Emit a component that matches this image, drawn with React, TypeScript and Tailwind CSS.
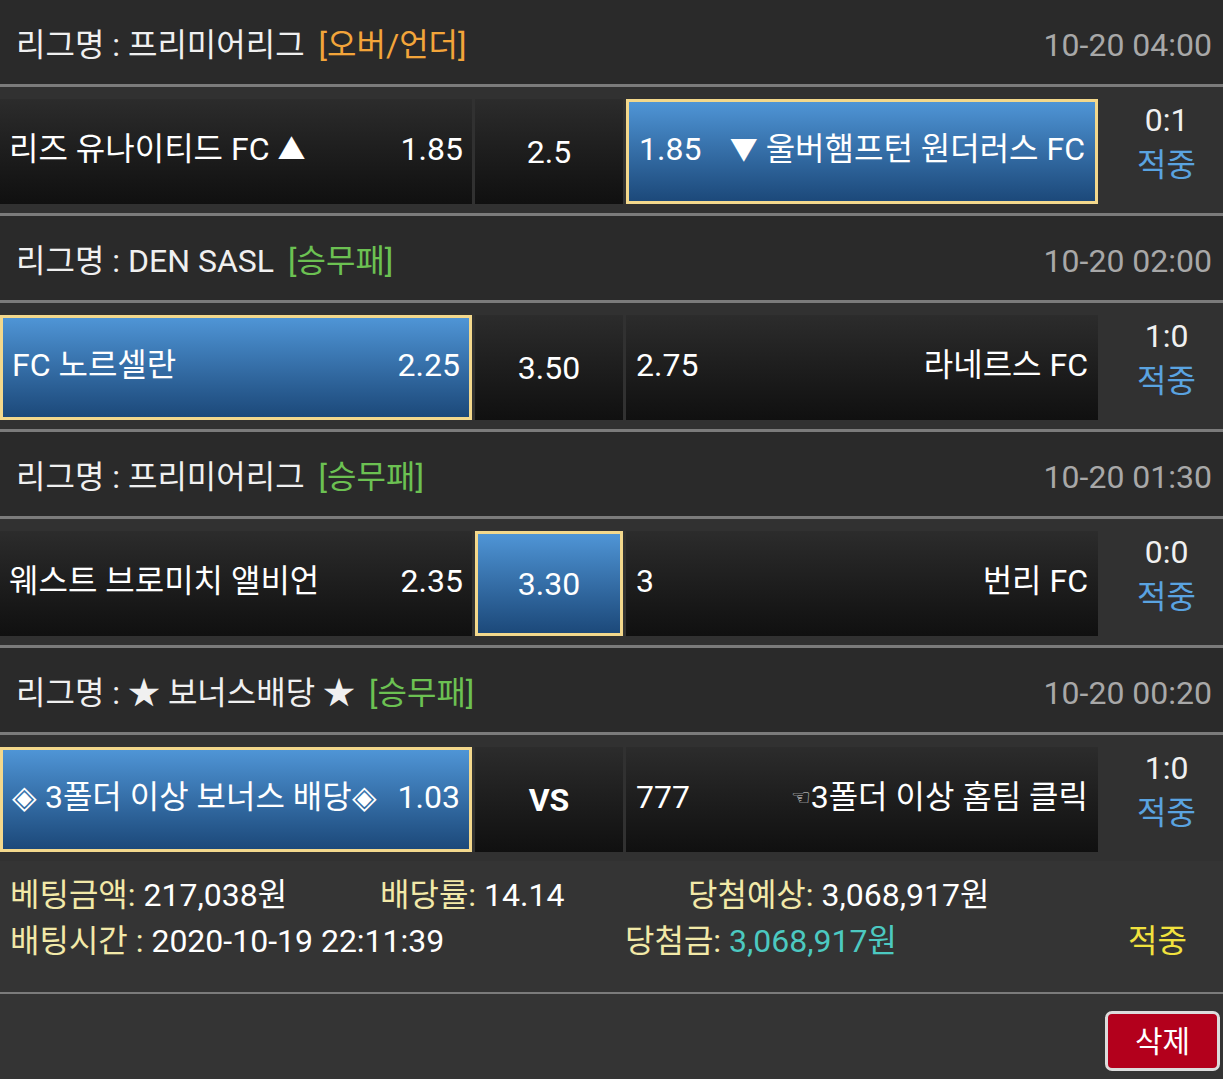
import clsx from 'clsx'

type Pick = 'home' | 'draw' | 'away'

interface Match {
  league: string
  type: string
  typeColor: string
  time: string
  home: React.ReactNode
  homeOdds: string
  draw: string
  drawBold?: boolean
  awayOdds: string
  away: React.ReactNode
  score: string
  pick: Pick
}

const matches: Match[] = [
  {
    league: '프리미어리그',
    type: '[오버/언더]',
    typeColor: 'text-[#f3a53a]',
    time: '10-20 04:00',
    home: (
      <span>
        리즈 유나이티드 FC <span className="text-[28px]">▲</span>
      </span>
    ),
    homeOdds: '1.85',
    draw: '2.5',
    awayOdds: '1.85',
    away: (
      <span>
        <span className="text-[28px]">▼</span> 울버햄프턴 원더러스 FC
      </span>
    ),
    score: '0:1',
    pick: 'away',
  },
  {
    league: 'DEN SASL',
    type: '[승무패]',
    typeColor: 'text-[#6cc152]',
    time: '10-20 02:00',
    home: 'FC 노르셀란',
    homeOdds: '2.25',
    draw: '3.50',
    awayOdds: '2.75',
    away: '라네르스 FC',
    score: '1:0',
    pick: 'home',
  },
  {
    league: '프리미어리그',
    type: '[승무패]',
    typeColor: 'text-[#6cc152]',
    time: '10-20 01:30',
    home: '웨스트 브로미치 앨비언',
    homeOdds: '2.35',
    draw: '3.30',
    awayOdds: '3',
    away: '번리 FC',
    score: '0:0',
    pick: 'draw',
  },
  {
    league: '★ 보너스배당 ★',
    type: '[승무패]',
    typeColor: 'text-[#6cc152]',
    time: '10-20 00:20',
    home: '◈ 3폴더 이상 보너스 배당◈',
    homeOdds: '1.03',
    draw: 'VS',
    drawBold: true,
    awayOdds: '777',
    away: (
      <span className="flex items-center">
        <span className="font-['DejaVu_Sans',sans-serif] text-[22px] text-[#e0e0e0]">☜</span>3폴더 이상 홈팀 클릭
      </span>
    ),
    score: '1:0',
    pick: 'home',
  },
]

function Cell({ selected, className, children }: { selected?: boolean; className?: string; children: React.ReactNode }) {
  return (
    <div
      className={clsx(
        'flex h-full items-center',
        selected
          ? 'border-[3px] border-[#f3d88c] bg-linear-to-b from-[#4f95d6] to-[#1c497a]'
          : 'bg-linear-to-b from-[#2c2c2c] to-[#101010]',
        className,
      )}
    >
      {children}
    </div>
  )
}

function Line() {
  return <div className="h-[3px] bg-[#7b7b7b]" />
}

function MatchBlock({ m, last }: { m: Match; last?: boolean }) {
  return (
    <>
      <div className="flex h-[84px] items-center justify-between bg-[#2a2a2a] pt-[5px] pl-[16px] pr-[11px]">
        <div className="flex items-center">
          <span className="text-[#f0f0f0]">리그명 : {m.league}</span>
          <span className={clsx('ml-[14px]', m.typeColor)}>{m.type}</span>
        </div>
        <span className="text-[#a8a8a8]">{m.time}</span>
      </div>
      <Line />
      <div className="flex h-[126px] bg-[#313131] pt-[12px] pb-[9px]">
        <Cell selected={m.pick === 'home'} className="w-[472px] justify-between px-[9px] pb-[5px]">
          {m.home}
          <span>{m.homeOdds}</span>
        </Cell>
        <Cell
          selected={m.pick === 'draw'}
          className={clsx('ml-[3px] w-[148px] justify-center pt-[1px]', m.drawBold && 'font-bold')}
        >
          {m.draw}
        </Cell>
        <Cell selected={m.pick === 'away'} className="ml-[3px] w-[472px] justify-between px-[10px] pb-[5px]">
          <span>{m.awayOdds}</span>
          {m.away}
        </Cell>
        <div className="flex flex-1 flex-col items-center justify-center pb-[18px] pl-[12px] leading-[45px]">
          <span className="text-[#f0f0f0]">{m.score}</span>
          <span className="text-[#5aa3e0]">적중</span>
        </div>
      </div>
      {!last && <Line />}
    </>
  )
}

export default function App() {
  return (
    <div className="w-[1223px] h-[1079px] overflow-hidden bg-[#343434] font-[Roboto,'Noto_Sans_CJK_KR',sans-serif] text-[32px] text-white">
      {matches.map((m, i) => (
        <MatchBlock key={i} m={m} last={i === matches.length - 1} />
      ))}

      <div className="flex h-[131px] flex-col pt-[11px] pl-[10px] leading-[46px]">
        <div className="flex">
          <span className="w-[370px]">
            <span className="text-[#f2e9a8]">베팅금액:</span> 217,038원
          </span>
          <span className="w-[308px]">
            <span className="text-[#f2e9a8]">배당률:</span> 14.14
          </span>
          <span>
            <span className="text-[#f2e9a8]">당첨예상:</span> 3,068,917원
          </span>
        </div>
        <div className="flex">
          <span className="w-[615px]">
            <span className="text-[#f2e9a8]">배팅시간 :</span> 2020-10-19 22:11:39
          </span>
          <span className="flex-1">
            <span className="text-[#f2e9a8]">당첨금:</span> <span className="text-[#4cc9c1]">3,068,917원</span>
          </span>
          <span className="pr-[36px] text-[#f1e23e]">적중</span>
        </div>
      </div>
      <div className="h-[2px] bg-[#7b7b7b]" />
      <div className="flex justify-end pt-[17px] pr-[3px]">
        <button className="h-[60px] w-[115px] rounded-[7px] border-[3px] border-[#dcdcdc] bg-[#b3001c] text-[30px] text-white">
          삭제
        </button>
      </div>
    </div>
  )
}
